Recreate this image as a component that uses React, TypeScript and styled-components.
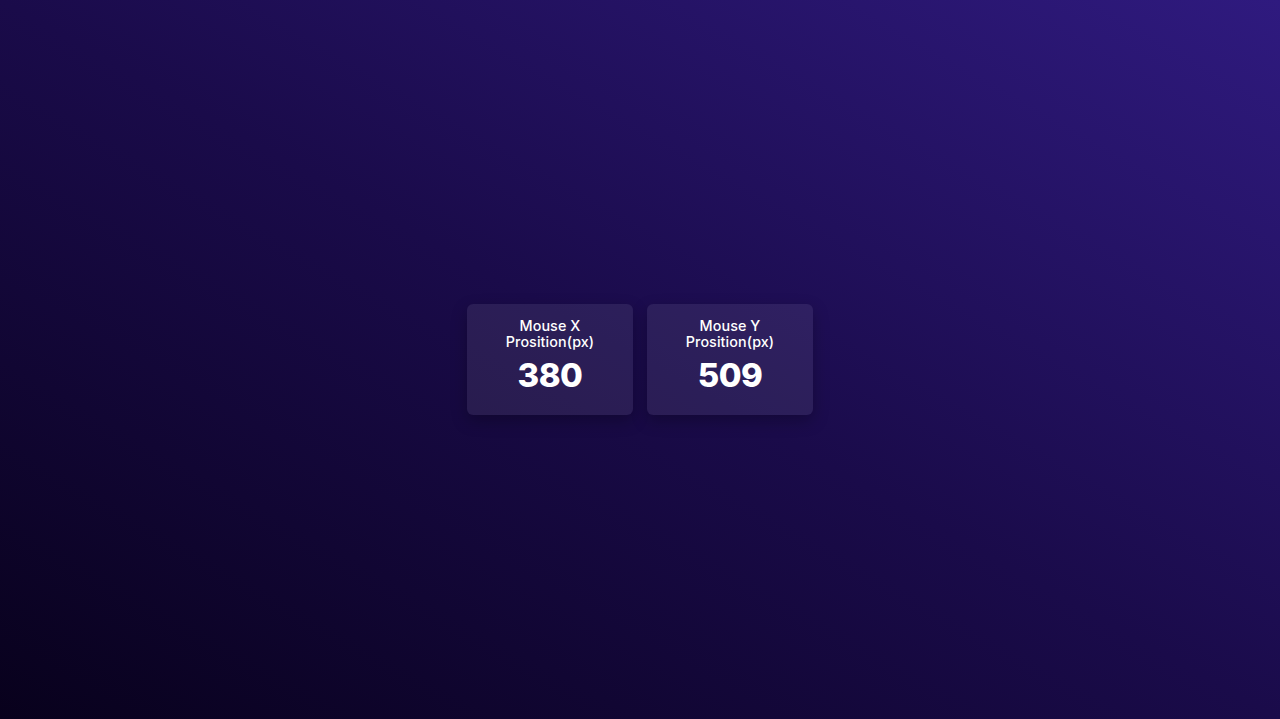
import React from "react";
import styled, { createGlobalStyle } from "styled-components";

const Global = createGlobalStyle`
  html, body { margin: 0; padding: 0; height: 100%; }
  body { font-family: Inter, "Noto Sans", sans-serif; }
  #root { height: 100%; }
`;

const Page = styled.div`
  width: 100vw;
  height: 100vh;
  background: linear-gradient(to top right, #08011c 0%, #1a0b4a 50%, #2f1a7f 100%);
  display: flex;
  align-items: center;
  justify-content: center;
  gap: 14px;
`;

const Card = styled.div`
  width: 166px;
  height: 111px;
  box-sizing: border-box;
  padding: 14px 16px 0;
  border-radius: 6px;
  background: rgba(255, 255, 255, 0.08);
  box-shadow: 0 6px 16px rgba(0, 0, 0, 0.25);
  display: flex;
  flex-direction: column;
  align-items: center;
  text-align: center;
  color: #fff;
`;

const Label = styled.div`
  font-size: 14.3px;
  font-weight: 500;
  line-height: 16px;
  letter-spacing: 0.1px;
  max-width: 120px;
`;

const Value = styled.div`
  font-size: 33px;
  font-weight: 800;
  line-height: 40px;
  margin-top: 5px;
  letter-spacing: -0.5px;
`;

const data = [
  { label: "Mouse X Prosition(px)", value: 380 },
  { label: "Mouse Y Prosition(px)", value: 509 },
];

export default function App() {
  return (
    <>
      <Global />
      <Page>
        {data.map((d) => (
          <Card key={d.label}>
            <Label>{d.label}</Label>
            <Value>{d.value}</Value>
          </Card>
        ))}
      </Page>
    </>
  );
}
